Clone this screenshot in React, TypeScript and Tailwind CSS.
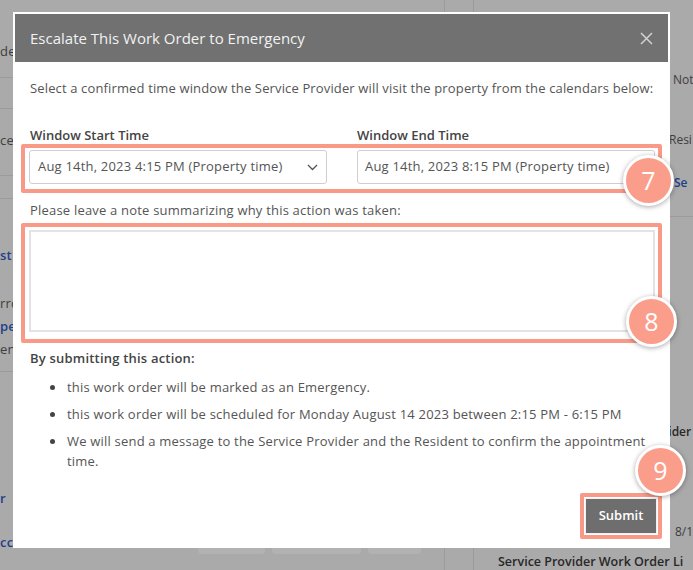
import React from "react";

const Badge = ({ n, className }: { n: string; className: string }) => (
  <div
    className={`absolute w-[51px] h-[51px] rounded-full bg-[#fb9d8b] border-[3px] border-white shadow-[0_1px_5px_rgba(0,0,0,0.35)] flex items-center justify-center text-white text-[25px] leading-none ${className}`}
  >
    {n}
  </div>
);

const Chevron = () => (
  <svg width="11" height="7" viewBox="0 0 11 7" fill="none">
    <path d="M1 1l4.5 4.5L10 1" stroke="#555" strokeWidth="1.3" />
  </svg>
);

const bullets = [
  "this work order will be marked as an Emergency.",
  "this work order will be scheduled for Monday August 14 2023 between 2:15 PM - 6:15 PM",
  "We will send a message to the Service Provider and the Resident to confirm the appointment time.",
];

const App = () => {
  return (
    <div className="relative w-[693px] h-[570px] overflow-hidden bg-[#f4f4f4] font-['Open_Sans',sans-serif] text-[13px] tracking-[0.2px]">
      {/* page behind the dialog */}
      <div className="flex h-full">
        <div className="w-[445px] shrink-0 flex flex-col border-r border-[#dedede] text-[#595959] leading-[16px]">
          <div className="h-[78px] border-b border-[#dedede] pt-[43px]">de</div>
          <div className="h-[31px] border-b border-[#dedede]" />
          <div className="h-[67px] border-b border-[#dedede] pt-[23px]">ce</div>
          <div className="h-[23px] border-b border-[#dedede]" />
          <div className="h-[173px] border-b border-[#dedede] flex flex-col pt-[48px]">
            <span className="text-[#2f5cc4] font-semibold">st A</span>
            <span className="mt-[32px]">rrc</span>
            <span className="mt-[7px] text-[#2f5cc4] font-semibold">pe</span>
            <span className="mt-[7px]">ent</span>
          </div>
          <div className="flex-1 flex flex-col pt-[118px]">
            <span className="text-[#2f5cc4] font-semibold">r</span>
            <div className="flex items-end mt-[14px]">
              <span className="w-[198px] text-[#2f5cc4] font-semibold pb-[2px]">cc…</span>
              <div className="flex gap-[7px] mb-[-2px]">
                <div className="w-[67px] h-[34px] bg-white rounded-sm" />
                <div className="w-[89px] h-[34px] bg-white rounded-sm" />
                <div className="w-[53px] h-[34px] bg-white rounded-sm" />
              </div>
            </div>
          </div>
        </div>
        <div className="w-[28px] shrink-0" />
        <div className="flex-1 min-w-0 overflow-hidden border-l border-[#dedede] pl-[24px] flex flex-col leading-[16px] text-[12px] tracking-normal text-[#595959] whitespace-nowrap">
          <div className="grid grid-cols-[175px_1fr] mt-[72px]">
            <span />
            <span>Not</span>
          </div>
          <div className="grid grid-cols-[171px_1fr] mt-[44px]">
            <span />
            <span>Resi</span>
          </div>
          <div className="grid grid-cols-[176px_1fr] mt-[27px]">
            <span />
            <span className="text-[#2f5cc4] font-semibold">Se</span>
          </div>
          <div className="border-b border-[#dedede] mt-[25px]" />
          <div className="grid grid-cols-[144px_1fr] mt-[207px] font-semibold text-[#3a3a3a]">
            <span />
            <span>Provider</span>
          </div>
          <div className="grid grid-cols-[177px_1fr] mt-[84px]">
            <span />
            <span>8/1</span>
          </div>
          <div className="mt-[14px] font-semibold text-[#3a3a3a] text-[12.5px]">Service Provider Work Order Li</div>
        </div>
      </div>

      {/* overlay */}
      <div className="absolute inset-0 bg-[rgba(0,0,0,0.3)]" />

      {/* dialog */}
      <div className="absolute left-[13px] top-[12px] w-[657px] h-[536px] bg-white p-[2px] flex flex-col text-[#555]">
        <div className="h-[48px] shrink-0 bg-[#717171] flex items-center justify-between pl-[15px] pr-[15px]">
          <span className="text-[15px] tracking-normal text-[#f2f2f2]">Escalate This Work Order to Emergency</span>
          <svg width="13" height="13" viewBox="0 0 13 13" fill="none">
            <path d="M1 1l11 11M12 1L1 12" stroke="#d2d2d2" strokeWidth="1.5" />
          </svg>
        </div>

        <p className="mt-[18px] pl-[15px] leading-[17px] tracking-[0.14px]">
          Select a confirmed time window the Service Provider will visit the property from the calendars below:
        </p>

        <div className="mt-[30px] ml-[14px] grid grid-cols-[298px_298px] gap-x-[30px] leading-[16px] font-semibold text-[#444] tracking-normal">
          <span className="pl-[1px]">Window Start Time</span>
          <span>Window End Time</span>
        </div>

        <div className="mt-[1px] ml-[6px] w-[641px] border-4 border-[#f99a88] rounded-[2px] pt-[2px] pb-[5px] pl-[4px] grid grid-cols-[298px_298px] gap-x-[30px]">
          <div className="h-[34px] border border-[#cfcfcf] rounded-[3px] flex items-center justify-between pl-[8px] pr-[8px]">
            <span>Aug 14th, 2023 4:15 PM (Property time)</span>
            <Chevron />
          </div>
          <div className="h-[34px] border border-[#cfcfcf] rounded-[3px] flex items-center pl-[7px]">
            <span>Aug 14th, 2023 8:15 PM (Property time)</span>
          </div>
        </div>

        <p className="mt-[9px] pl-[15px] leading-[16px]">
          Please leave a note summarizing why this action was taken:
        </p>

        <div className="mt-[5px] ml-[6px] w-[641px] border-4 border-[#f99a88] rounded-[2px] pt-[3px] pb-[7px] pl-[4px] pr-[3px]">
          <textarea className="block w-full h-[102px] border-2 border-[#e3e3e3] resize-none outline-none" />
        </div>

        <p className="mt-[7px] pl-[15px] leading-[16px] font-semibold text-[#444]">By submitting this action:</p>

        <ul className="mt-[11px] pl-[35px] pr-[18px] flex flex-col gap-[7px] leading-[20px]">
          {bullets.map((b) => (
            <li key={b} className="flex">
              <span className="w-[17px] shrink-0 flex pt-[8px]">
                <span className="w-[5px] h-[5px] rounded-full bg-[#444]" />
              </span>
              <span>{b}</span>
            </li>
          ))}
        </ul>

        <div className="mt-auto flex justify-end pr-[6px] pb-[7px]">
          <div className="border-4 border-[#f99a88] rounded-[2px] p-[1px]">
            <button className="w-[72px] h-[36px] bg-[#6e6e6e] border border-[#f0f0f0] text-white text-[13px] font-semibold tracking-normal">
              Submit
            </button>
          </div>
        </div>
      </div>

      <Badge n="7" className="left-[623px] top-[155px]" />
      <Badge n="8" className="left-[626px] top-[296px]" />
      <Badge n="9" className="left-[635px] top-[445px]" />
    </div>
  );
};

export default App;
